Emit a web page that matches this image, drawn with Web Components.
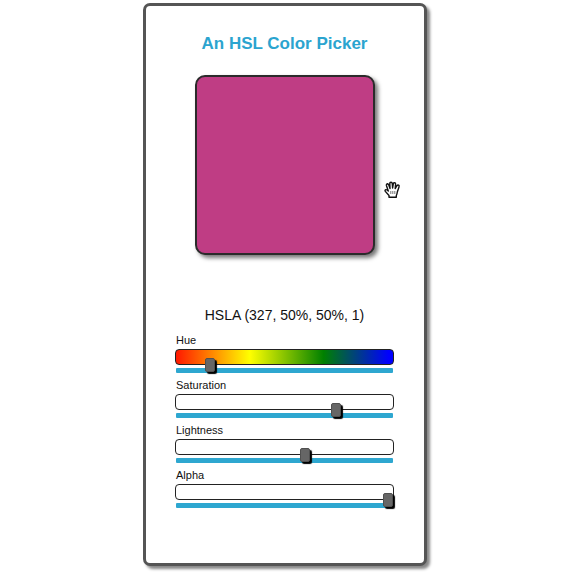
<!DOCTYPE html>
<html lang="en">
<head>
<meta charset="utf-8">
<title>An HSL Color Picker</title>
<style>
  body { margin: 0; padding: 3px 7px 7px 0; background: #fff; color: #111; font-family: "Liberation Sans", Arial, sans-serif; }
</style>
</head>
<body>
<hsl-picker>
  <color-swatch></color-swatch>
  <color-value>HSLA (327, 50%, 50%, 1)</color-value>
  <color-slider label="Hue" max="360" value="51" style="--fill: linear-gradient(to right, #ff1800, #ff8a00 17%, #ffff00 34%, #008000 68%, #0000ff 98%)"></color-slider>
  <color-slider label="Saturation" max="100" value="75"></color-slider>
  <color-slider label="Lightness" max="100" value="60"></color-slider>
  <color-slider label="Alpha" max="100" value="100"></color-slider>
</hsl-picker>
<hand-pointer></hand-pointer>

<script>
class Base extends HTMLElement {
  render(html) {
    this.attachShadow({ mode: "open" }).innerHTML = html;
  }
}

customElements.define("hsl-picker", class extends Base {
  connectedCallback() {
    this.render(`<style>
      :host { display: block; box-sizing: border-box; width: 100%; max-width: 284px; margin: 0 auto;
        padding: 27px 30px 51px 29px; border: 3px solid #555; border-radius: 7px;
        background: #fff; box-shadow: 3px 3px 3px #888; }
      h1 { margin: 0; font-size: 17px; line-height: 22px; font-weight: bold; text-align: center; color: #2ba4cf; }
    </style>
    <h1>An HSL Color Picker</h1>
    <slot></slot>`);
  }
});

customElements.define("color-swatch", class extends Base {
  connectedCallback() {
    this.render(`<style>
      :host { display: block; box-sizing: border-box; width: 180px; max-width: 100%; aspect-ratio: 1; margin: 20px auto 0;
        border: 2px solid #2b2b2b; border-radius: 10px; background: #bf3d84; box-shadow: 3px 3px 4px #777; }
    </style>`);
  }
});

customElements.define("color-value", class extends Base {
  connectedCallback() {
    this.render(`<style>
      :host { display: block; margin: 50px 0 7px; font-size: 14px; line-height: 20px; text-align: center; }
    </style><slot></slot>`);
  }
});

customElements.define("color-slider", class extends Base {
  connectedCallback() {
    const label = this.getAttribute("label");
    this.render(`<style>
      :host { display: block; padding-bottom: 4px; }
      label { display: block; padding: 0 1px; font-size: 11px; line-height: 17px; }
      .bar { box-sizing: border-box; height: 16px; border: 1px solid #222; border-radius: 4px; background: var(--fill, #fff); }
      .range { display: flex; padding: 3px 1px 0; }
      input { -webkit-appearance: none; appearance: none; display: block; position: relative; flex: 1; min-width: 0;
        height: 5px; margin: 0; background: #2ea7d0; border-radius: 1px; }
      input::-webkit-slider-runnable-track { height: 5px; }
      input::-webkit-slider-thumb { -webkit-appearance: none; width: 10px; height: 14px; margin-top: -10px;
        box-sizing: border-box; border: 1px solid #505050; border-radius: 2px; background: #666; box-shadow: 2px 2px 1px #000; }
    </style>
    <label for="range">${label}</label>
    <div class="bar"></div>
    <div class="range"><input id="range" type="range" min="0" max="${this.getAttribute("max")}" value="${this.getAttribute("value")}"></div>`);
  }
});

customElements.define("hand-pointer", class extends Base {
  connectedCallback() {
    this.render(`<style>
      :host { position: absolute; top: 181px; left: calc(50% + 95px); width: 17px; height: 18px; pointer-events: none; }
      svg { display: block; }
    </style>
    <svg width="17" height="18" viewBox="0 0 17 18" aria-hidden="true">
      <path d="M5 16.2 V14.5 L1.3 10.4 Q0.6 9 1.8 8.6 Q2.8 8.4 4.3 10 L2.4 4.5 Q2.1 3 3.3 2.7 Q4.3 2.6 4.8 4 L6 7.5 L5.8 2.6 Q5.8 1.2 7 1.2 Q8.2 1.2 8.3 2.6 L8.6 7 L9.3 2.8 Q9.6 1.5 10.7 1.8 Q11.8 2 11.6 3.4 L11.2 7.6 L12.9 4.7 Q13.7 3.7 14.6 4.2 Q15.5 4.8 15 6 L13.3 11 Q13 13.5 12.3 14.6 V16.2 Z" fill="#fff" stroke="#111" stroke-width="1.4" stroke-linejoin="round"/>
      <path d="M6.8 10v3M8.8 10v3M10.8 10v3" stroke="#777" stroke-width="1"/>
    </svg>`);
  }
});
</script>
</body>
</html>
